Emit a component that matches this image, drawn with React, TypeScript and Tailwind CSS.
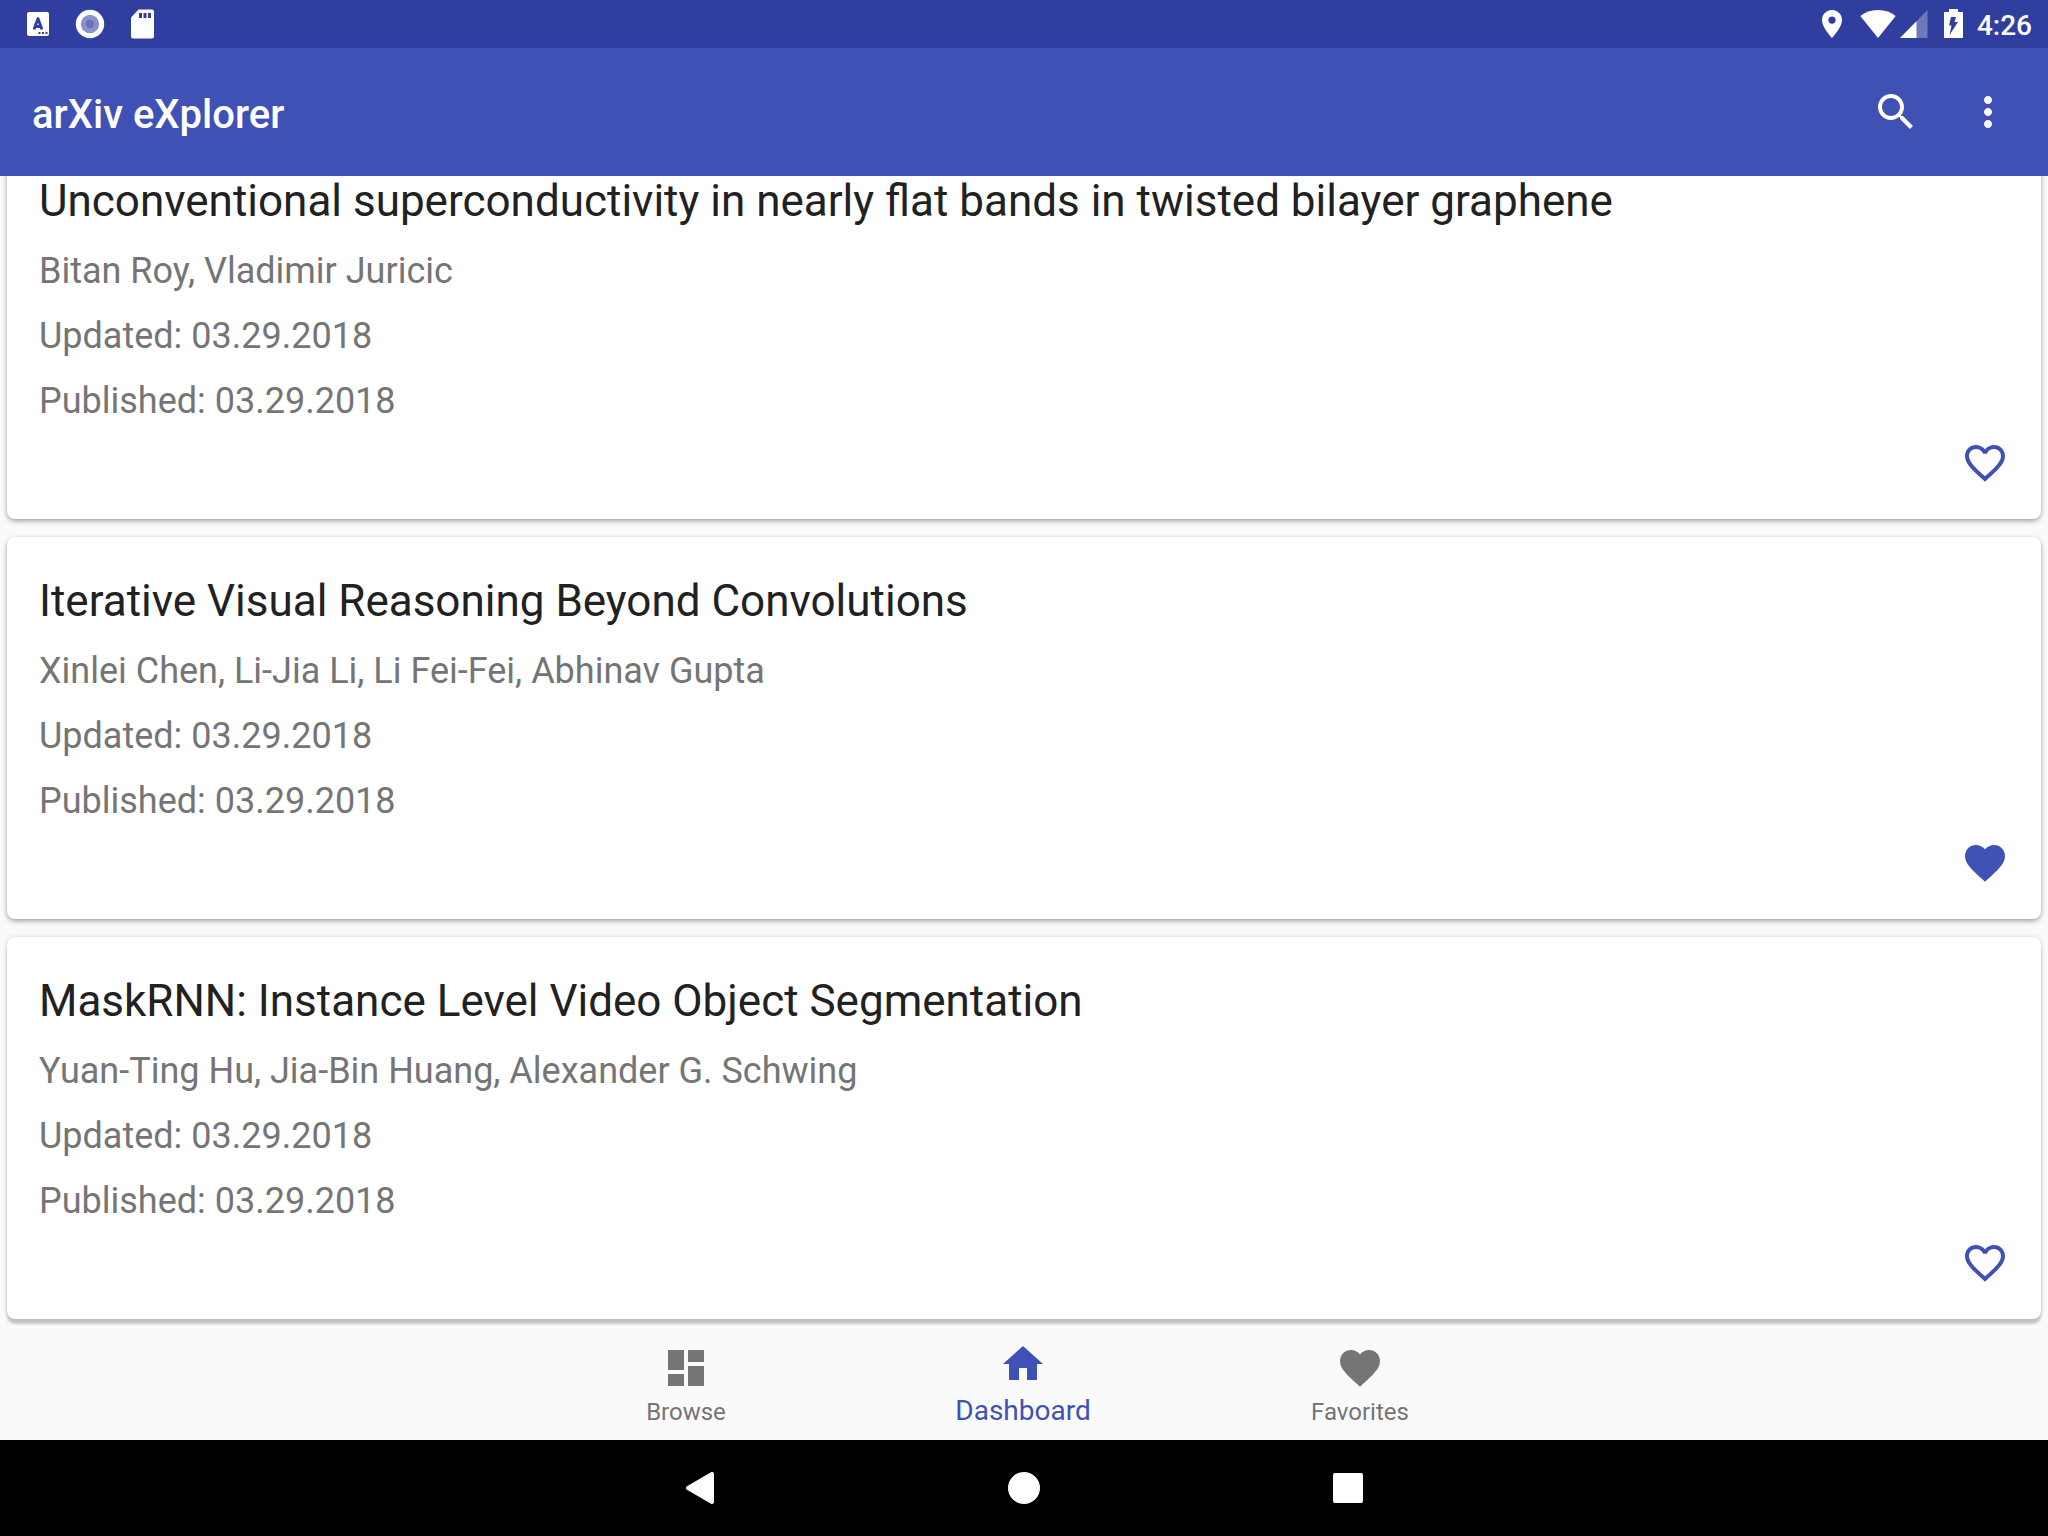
import React from "react";

type Paper = { title: string; authors: string; updated: string; published: string; favorite: boolean };

const papers: Paper[] = [
  {
    title: "Unconventional superconductivity in nearly flat bands in twisted bilayer graphene",
    authors: "Bitan Roy, Vladimir Juricic",
    updated: "03.29.2018",
    published: "03.29.2018",
    favorite: false,
  },
  {
    title: "Iterative Visual Reasoning Beyond Convolutions",
    authors: "Xinlei Chen, Li-Jia Li, Li Fei-Fei, Abhinav Gupta",
    updated: "03.29.2018",
    published: "03.29.2018",
    favorite: true,
  },
  {
    title: "MaskRNN: Instance Level Video Object Segmentation",
    authors: "Yuan-Ting Hu, Jia-Bin Huang, Alexander G. Schwing",
    updated: "03.29.2018",
    published: "03.29.2018",
    favorite: false,
  },
];

const HEART =
  "M12 21.35l-1.45-1.32C5.4 15.36 2 12.28 2 8.5 2 5.42 4.42 3 7.5 3c1.74 0 3.41.81 4.5 2.09C13.09 3.81 14.76 3 16.5 3 19.58 3 22 5.42 22 8.5c0 3.78-3.4 6.86-8.55 11.54L12 21.35z";
const HEART_OUTLINE =
  "M16.5 3c-1.74 0-3.41.81-4.5 2.09C10.91 3.81 9.24 3 7.5 3 4.42 3 2 5.42 2 8.5c0 3.78 3.4 6.86 8.55 11.54L12 21.35l1.45-1.32C18.6 15.36 22 12.28 22 8.5 22 5.42 19.58 3 16.5 3zm-4.4 15.55l-.1.1-.1-.1C7.14 14.24 4 11.39 4 8.5 4 6.5 5.5 5 7.5 5c1.54 0 3.04.99 3.57 2.36h1.87C13.46 5.99 14.96 5 16.5 5c2 0 3.5 1.5 3.5 3.5 0 2.89-3.14 5.74-7.9 10.05z";
const SEARCH =
  "M15.5 14h-.79l-.28-.27C15.41 12.59 16 11.11 16 9.5 16 5.91 13.09 3 9.5 3S3 5.91 3 9.5 5.91 16 9.5 16c1.61 0 3.09-.59 4.23-1.57l.27.28v.79l5 4.99L20.49 19l-4.99-5zm-6 0C7.01 14 5 11.99 5 9.5S7.01 5 9.5 5 14 7.01 14 9.5 11.99 14 9.5 14z";
const MORE =
  "M12 8c1.1 0 2-.9 2-2s-.9-2-2-2-2 .9-2 2 .9 2 2 2zm0 2c-1.1 0-2 .9-2 2s.9 2 2 2 2-.9 2-2-.9-2-2-2zm0 6c-1.1 0-2 .9-2 2s.9 2 2 2 2-.9 2-2-.9-2-2-2z";
const DASHBOARD = "M3 13h8V3H3v10zm0 8h8v-6H3v6zm10 0h8V11h-8v10zm0-18v6h8V3h-8z";
const HOME = "M10 20v-6h4v6h5v-8h3L12 3 2 12h3v8z";

function Icon({ d }: { d: string }) {
  return (
    <svg viewBox="0 0 24 24" className="size-12" fill="currentColor" aria-hidden="true">
      <path d={d} />
    </svg>
  );
}

function StatusBar() {
  return (
    <div className="flex h-12 shrink-0 items-center justify-between bg-[#303f9f] pr-4 pl-6 text-white">
      <div className="flex items-center gap-4">
        <svg viewBox="0 0 28 32" className="h-8 w-7" aria-hidden="true">
          <rect x="3" y="4" width="22" height="24" rx="2" fill="#fff" />
          <path d="M10 21.500l4-11 4 11M11 18.500h6" fill="none" stroke="#303f9f" strokeWidth="2.800" strokeLinejoin="round" />
          <path d="M14.500 24h2v2h-2zM18 24h2v2h-2zM21.500 24h2v2h-2z" fill="#303f9f" />
        </svg>
        <svg viewBox="0 0 44 32" className="h-8 w-11" aria-hidden="true">
          <circle cx="22" cy="16" r="14.200" fill="#fff" />
          <circle cx="22" cy="16" r="9.200" fill="#8a92cc" />
          <circle cx="22" cy="16" r="4.200" fill="#6770b9" />
        </svg>
        <svg viewBox="0 0 28 32" className="h-8 w-7" aria-hidden="true">
          <path d="M10.500 1.500H24a2 2 0 0 1 2 2v25a2 2 0 0 1-2 2H5a2 2 0 0 1-2-2V9.500z" fill="#fff" />
          <path d="M11 5h3v5h-3zM15.500 5h3v5h-3zM20 5h3v5h-3z" fill="#303f9f" />
        </svg>
      </div>
      <div className="flex items-center">
        <svg viewBox="0 0 24 32" className="mr-4 h-8 w-6" aria-hidden="true">
          <path
            fillRule="evenodd"
            fill="#fff"
            d="M12 2C6.400 2 2 6.400 2 12c0 7.400 10 18 10 18s10-10.600 10-18C22 6.400 17.600 2 12 2zm0 6.500a3.600 3.600 0 1 1 0 7.200 3.600 3.600 0 0 1 0-7.200z"
          />
        </svg>
        <svg viewBox="0 0 36 32" className="h-8 w-9" aria-hidden="true">
          <path d="M18 30L.3 8C5 4 11 2 18 2s13 2 17.700 6z" fill="#fff" />
        </svg>
        <svg viewBox="0 0 28 32" className="mr-4 ml-1 h-8 w-7" aria-hidden="true">
          <path d="M0 30L27.500 2v28z" fill="#fff" fillOpacity="0.300" />
          <path d="M0 30L16.500 13.200v16.800z" fill="#fff" />
        </svg>
        <svg viewBox="0 0 20 32" className="mr-[13px] h-8 w-5" aria-hidden="true">
          <path
            fillRule="evenodd"
            fill="#fff"
            d="M5 1h9v3h5v26H0V4h5zM7 9h5l-1.500 5H14L5.500 27l2-9.500H5z"
          />
        </svg>
        <time className="pt-1 text-[28px] leading-8 font-medium">4:26</time>
      </div>
    </div>
  );
}

function PaperCard({ paper }: { paper: Paper }) {
  return (
    <article className="shrink-0 rounded-lg bg-white px-8 pt-[38px] pb-8 shadow-[0_2px_5px_rgba(0,0,0,0.36)] last:shadow-[0_5px_3px_rgba(0,0,0,0.2),0_0_5px_rgba(0,0,0,0.14)]">
      <h2 className="text-[44px] leading-[52px] text-[#212121]">{paper.title}</h2>
      <div className="mt-[22px] flex flex-col gap-[21px] text-[36px] leading-[44px] text-[#757575]">
        <p>{paper.authors}</p>
        <p>Updated: {paper.updated}</p>
        <p>Published: {paper.published}</p>
      </div>
      <div className="mt-4 flex justify-end text-[#3f51b5]">
        <button type="button" aria-pressed={paper.favorite} aria-label={`Favorite ${paper.title}`}>
          <Icon d={paper.favorite ? HEART : HEART_OUTLINE} />
        </button>
      </div>
    </article>
  );
}

export default function App() {
  return (
    <div className="flex h-screen flex-col overflow-hidden bg-[#fafafa] font-[Roboto,sans-serif]">
      <StatusBar />
      <header className="flex h-32 shrink-0 items-center justify-between bg-[#3f51b5] pr-9 pl-8 text-white">
        <h1 className="pt-1.5 text-[40px] leading-[48px] font-medium">arXiv eXplorer</h1>
        <div className="flex gap-11">
          <button type="button" aria-label="Search">
            <Icon d={SEARCH} />
          </button>
          <button type="button" aria-label="More options">
            <Icon d={MORE} />
          </button>
        </div>
      </header>
      <main className="flex min-h-0 flex-1 flex-col justify-end gap-[18px] overflow-hidden px-[7px] pb-[9px]">
        {papers.map((p) => (
          <PaperCard key={p.title} paper={p} />
        ))}
      </main>
      <nav className="flex h-28 shrink-0 justify-center pr-0.5 text-[#757575]">
        <button type="button" className="flex w-[337px] flex-col items-center justify-end pb-3">
          <Icon d={DASHBOARD} />
          <span className="mt-1 text-2xl leading-8">Browse</span>
        </button>
        <button type="button" aria-current="page" className="flex w-[337px] flex-col items-center justify-end pb-[13px] text-[#3f51b5]">
          <Icon d={HOME} />
          <span className="mt-[7px] text-[28px] leading-8">Dashboard</span>
        </button>
        <button type="button" className="flex w-[337px] flex-col items-center justify-end pb-3">
          <Icon d={HEART} />
          <span className="mt-1 text-2xl leading-8">Favorites</span>
        </button>
      </nav>
      <div className="flex h-24 shrink-0 items-center justify-center bg-black text-white">
        <button type="button" aria-label="Back" className="flex w-[324px] justify-center">
          <svg viewBox="0 0 32 32" className="size-8" aria-hidden="true">
            <path
              d="M4 16L28 2v28z"
              fill="#fff"
              stroke="#fff"
              strokeWidth="4"
              strokeLinejoin="round"
            />
          </svg>
        </button>
        <button type="button" aria-label="Home" className="flex w-[324px] justify-center">
          <span className="size-8 rounded-full bg-white" />
        </button>
        <button type="button" aria-label="Recent apps" className="flex w-[324px] justify-center">
          <span className="size-[30px] rounded-xs bg-white" />
        </button>
      </div>
    </div>
  );
}
